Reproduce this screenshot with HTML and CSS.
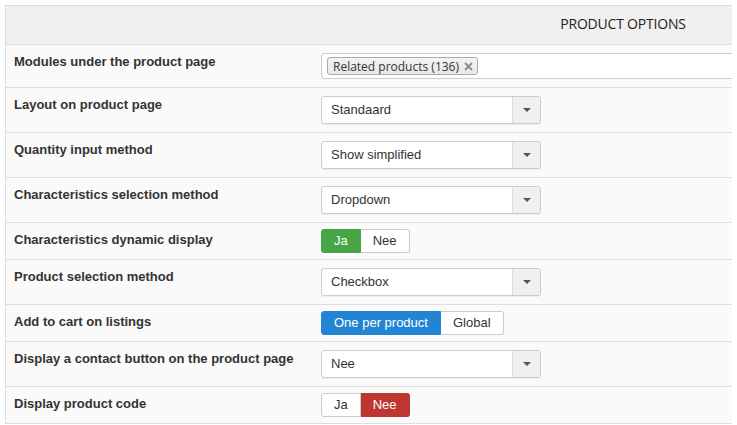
FILE: index.html
```html
<!DOCTYPE html>
<html lang="en">
<head>
    <meta charset="UTF-8">
    <title>Product options</title>
    <link rel="stylesheet" href="styles.css">
</head>
<body>
    <div class="options-panel">
        <div class="panel-header">Product options</div>

        <div class="option-row">
            <div class="option-label">Modules under the product page</div>
            <div class="option-control">
                <div class="multi-select">
                    <span class="choice-tag">Related products (136)
                        <svg class="choice-remove" width="9" height="9" viewBox="0 0 9 9"><path d="M1 1 L8 8 M8 1 L1 8" stroke="#8a8a8a" stroke-width="1.8" fill="none"/></svg>
                    </span>
                </div>
            </div>
        </div>

        <div class="option-row">
            <div class="option-label">Layout on product page</div>
            <div class="option-control">
                <div class="select-box"><span class="select-value">Standaard</span><span class="select-arrow"><b></b></span></div>
            </div>
        </div>

        <div class="option-row">
            <div class="option-label">Quantity input method</div>
            <div class="option-control">
                <div class="select-box"><span class="select-value">Show simplified</span><span class="select-arrow"><b></b></span></div>
            </div>
        </div>

        <div class="option-row">
            <div class="option-label">Characteristics selection method</div>
            <div class="option-control">
                <div class="select-box"><span class="select-value">Dropdown</span><span class="select-arrow"><b></b></span></div>
            </div>
        </div>

        <div class="option-row">
            <div class="option-label">Characteristics dynamic display</div>
            <div class="option-control toggle-cell">
                <div class="btn-group">
                    <span class="btn btn-success">Ja</span><span class="btn">Nee</span>
                </div>
            </div>
        </div>

        <div class="option-row">
            <div class="option-label">Product selection method</div>
            <div class="option-control">
                <div class="select-box"><span class="select-value">Checkbox</span><span class="select-arrow"><b></b></span></div>
            </div>
        </div>

        <div class="option-row">
            <div class="option-label">Add to cart on listings</div>
            <div class="option-control toggle-cell">
                <div class="btn-group">
                    <span class="btn btn-primary">One per product</span><span class="btn">Global</span>
                </div>
            </div>
        </div>

        <div class="option-row">
            <div class="option-label">Display a contact button on the product page</div>
            <div class="option-control">
                <div class="select-box"><span class="select-value">Nee</span><span class="select-arrow"><b></b></span></div>
            </div>
        </div>

        <div class="option-row">
            <div class="option-label">Display product code</div>
            <div class="option-control toggle-cell">
                <div class="btn-group">
                    <span class="btn">Ja</span><span class="btn btn-danger">Nee</span>
                </div>
            </div>
        </div>
    </div>
</body>
</html>
```

FILE: styles.css
```css
body {
    margin: 5px;
    background: #fff;
    font-family: 'Liberation Sans', Arial, sans-serif;
    font-size: 13px;
    color: #333;
    overflow: hidden;
}

.options-panel {
    width: 1234px;
    border: 1px solid #ddd;
    background: #fafafa;
}

.panel-header {
    height: 38px;
    line-height: 36px;
    background: #f0f0f0;
    text-align: center;
    text-transform: uppercase;
    font-family: 'Open Sans', sans-serif;
    font-size: 14px;
    font-weight: 500;
    letter-spacing: -0.2px;
    color: #222;
}

/* Option rows */
.option-row {
    display: flex;
    border-top: 1px solid #ddd;
}
.option-label {
    width: 307px;
    flex-shrink: 0;
    box-sizing: border-box;
    padding: 8px 8px 6px;
    line-height: 18px;
    font-weight: bold;
}
.option-control {
    flex-grow: 1;
    padding: 8px;
}
.option-control.toggle-cell {
    padding: 6px 8px;
}

/* Multiple select with tags */
.multi-select {
    height: 26px;
    box-sizing: border-box;
    border: 1px solid #ccc;
    border-radius: 3px;
    background: #fff;
    padding: 3px 5px;
}
.choice-tag {
    display: inline-flex;
    align-items: center;
    height: 18px;
    box-sizing: border-box;
    padding: 0 4px 0 5px;
    border: 1px solid #aaa;
    border-radius: 3px;
    background: linear-gradient(#f4f4f4, #e8e8e8);
    font-family: 'Open Sans', sans-serif;
    font-size: 12px;
    color: #333;
}
.choice-remove {
    margin-left: 5px;
}

/* Single select */
.select-box {
    display: flex;
    width: 220px;
    height: 28px;
    box-sizing: border-box;
    border: 1px solid #ccc;
    border-radius: 3px;
    background: #fff;
    box-shadow: 0 1px 1px rgba(0, 0, 0, 0.06);
}
.select-value {
    flex-grow: 1;
    padding-left: 9px;
    line-height: 26px;
}
.select-arrow {
    width: 27px;
    display: flex;
    align-items: center;
    justify-content: center;
    background: #f0f0f0;
    border-left: 1px solid #ddd;
    border-radius: 0 3px 3px 0;
}
.select-arrow b {
    width: 0;
    height: 0;
    border-left: 4px solid transparent;
    border-right: 4px solid transparent;
    border-top: 4px solid #555;
}

/* Yes / no button groups */
.btn-group {
    display: inline-flex;
}
.btn {
    height: 24px;
    box-sizing: border-box;
    padding: 0 12px;
    line-height: 22px;
    border: 1px solid #ccc;
    background: #fff;
    color: #333;
}
.btn:first-child {
    border-radius: 3px 0 0 3px;
}
.btn:last-child {
    border-radius: 0 3px 3px 0;
    border-left: none;
}
.btn-success {
    background: #46a546;
    border-color: #46a546;
    color: #fff;
}
.btn-primary {
    background: #2384d3;
    border-color: #2384d3;
    color: #fff;
}
.btn-danger {
    background: #bd362f;
    border-color: #bd362f;
    color: #fff;
}
```
